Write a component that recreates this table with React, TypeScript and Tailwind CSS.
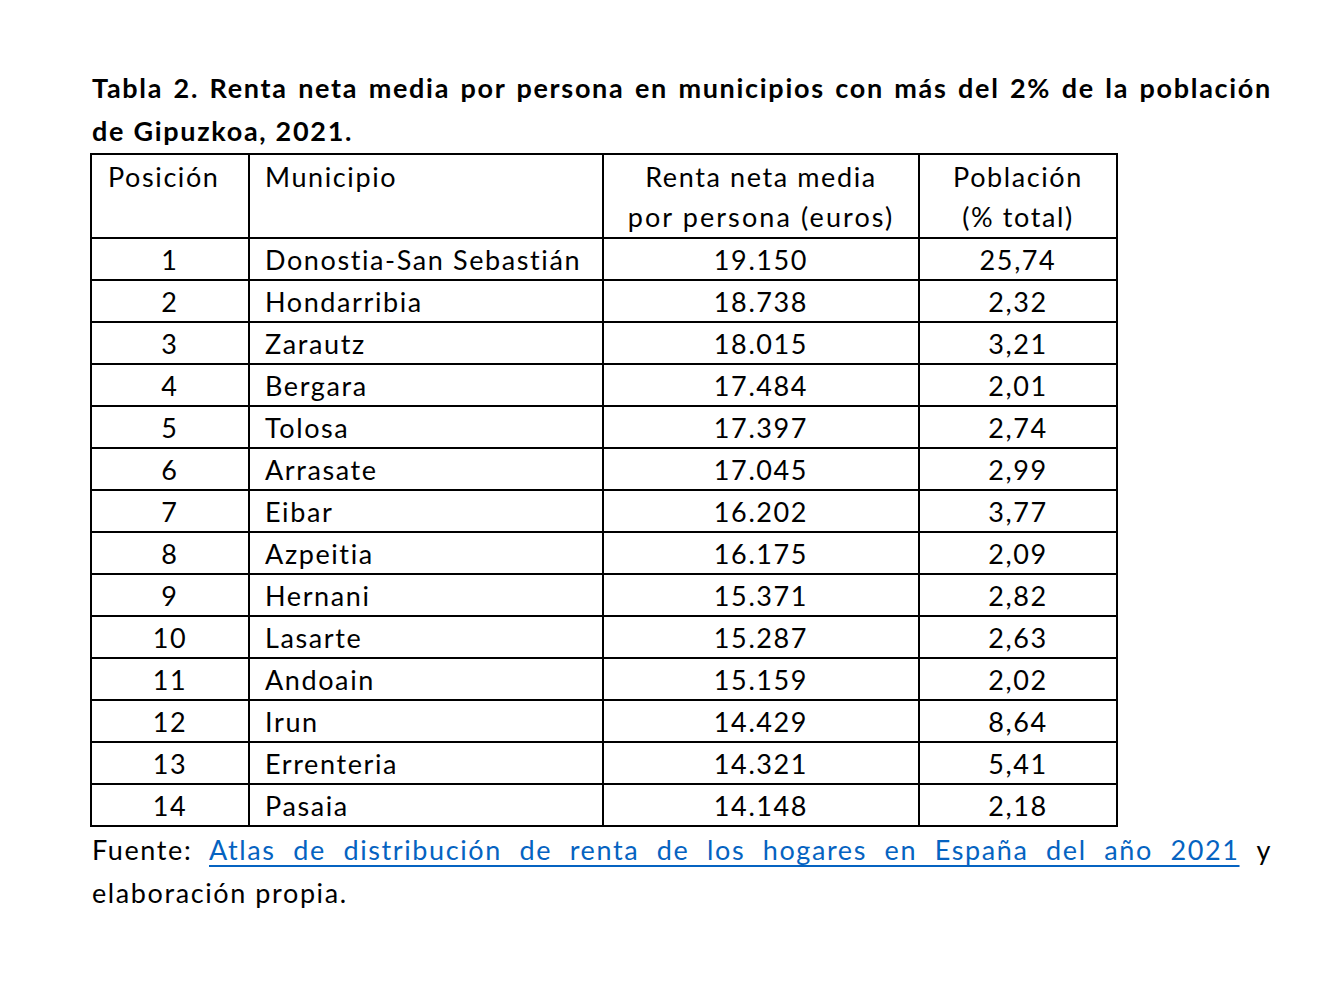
import React from "react";

const rows: [string, string, string, string][] = [
  ["1", "Donostia-San Sebastián", "19.150", "25,74"],
  ["2", "Hondarribia", "18.738", "2,32"],
  ["3", "Zarautz", "18.015", "3,21"],
  ["4", "Bergara", "17.484", "2,01"],
  ["5", "Tolosa", "17.397", "2,74"],
  ["6", "Arrasate", "17.045", "2,99"],
  ["7", "Eibar", "16.202", "3,77"],
  ["8", "Azpeitia", "16.175", "2,09"],
  ["9", "Hernani", "15.371", "2,82"],
  ["10", "Lasarte", "15.287", "2,63"],
  ["11", "Andoain", "15.159", "2,02"],
  ["12", "Irun", "14.429", "8,64"],
  ["13", "Errenteria", "14.321", "5,41"],
  ["14", "Pasaia", "14.148", "2,18"],
];

export default function App() {
  return (
    <div className="min-h-[1005px] w-[1336px] bg-white text-black font-['Lato','Liberation_Sans',sans-serif]">
      <div className="pl-[92px] pt-[66px]">
        <div className="w-[1180px] text-[27px] font-bold leading-[43px] tracking-[1.7px]">
          <div className="text-justify [text-align-last:justify] whitespace-nowrap">
            Tabla 2. Renta neta media por persona en municipios con más del 2% de la población
          </div>
          <div>de Gipuzkoa, 2021.</div>
        </div>
      </div>
      <div className="pl-[90px] pt-[1px]">
        <table className="w-[1026px] border-collapse border-2 border-black text-[27px] tracking-[1.6px] table-fixed">
          <colgroup>
            <col className="w-[158px]" />
            <col className="w-[354px]" />
            <col className="w-[316px]" />
            <col className="w-[198px]" />
          </colgroup>
          <thead>
            <tr className="h-[84px]">
              <th className="border-2 border-black align-top font-normal text-left pl-[16px] pt-[2px] leading-[40px]">
                Posición
              </th>
              <th className="border-2 border-black align-top font-normal text-left pl-[15px] pt-[2px] leading-[40px]">
                Municipio
              </th>
              <th className="border-2 border-black align-top font-normal text-center pt-[2px] leading-[40px]">
                Renta neta media
                <br />
                <span className="tracking-[2.1px]">por persona (euros)</span>
              </th>
              <th className="border-2 border-black align-top font-normal text-center pt-[2px] leading-[40px]">
                Población
                <br />
                (% total)
              </th>
            </tr>
          </thead>
          <tbody>
            {rows.map((r) => (
              <tr key={r[0]} className="h-[42px]">
                <td className="border-2 border-black text-center leading-[38px] p-0 pt-[1px]">{r[0]}</td>
                <td className="border-2 border-black text-left pl-[15px] leading-[38px] p-0 pt-[1px]">{r[1]}</td>
                <td className="border-2 border-black text-center leading-[38px] p-0 pt-[1px]">{r[2]}</td>
                <td className="border-2 border-black text-center leading-[38px] p-0 pt-[1px]">{r[3]}</td>
              </tr>
            ))}
          </tbody>
        </table>
      </div>
      <div className="pl-[92px] pt-[1px]">
        <div className="w-[1180px] text-[27px] leading-[43px] tracking-[1.6px]">
          <div className="text-justify [text-align-last:justify] whitespace-nowrap">
            Fuente:{" "}
            <span className="text-[#0563c1] underline decoration-2 underline-offset-[5px]">
              Atlas de distribución de renta de los hogares en España del año 2021
            </span>{" "}
            y
          </div>
          <div>elaboración propia.</div>
        </div>
      </div>
    </div>
  );
}
